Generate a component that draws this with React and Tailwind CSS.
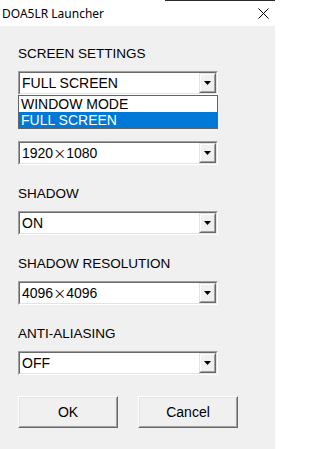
import React from "react";

const Arrow = () => (
  <svg width="7" height="4" viewBox="0 0 7 4" className="block">
    <polygon points="0,0 7,0 3.5,4" fill="#000" />
  </svg>
);

const Times = () => (
  <span className="font-['Noto_Sans_CJK_JP',sans-serif] text-[13px]">×</span>
);

const Combo = ({ children, open }) => (
  <div className="relative w-[200px]">
    <div className="border border-t-[#a0a0a0] border-l-[#a0a0a0] border-b-white border-r-white">
      <div className="flex h-[22px] border border-t-[#696969] border-l-[#696969] border-b-[#e3e3e3] border-r-[#e3e3e3] bg-white">
        <div className="flex-1 pl-[2px] leading-[20px] text-[14px] text-black whitespace-nowrap">
          {children}
        </div>
        <div className="w-[17px] border border-t-[#e3e3e3] border-l-[#e3e3e3] border-b-[#696969] border-r-[#696969]">
          <div className="flex h-full items-center justify-center border border-t-white border-l-white border-b-[#a0a0a0] border-r-[#a0a0a0] bg-[#f0f0f0]">
            <Arrow />
          </div>
        </div>
      </div>
    </div>
    {open && (
      <div className="absolute left-0 top-[24px] z-10 w-[200px] border border-[#646464] bg-white text-[14px] leading-4">
        <div className="h-4 pl-[2px] text-black">WINDOW MODE</div>
        <div className="h-4 pl-[2px] bg-[#0078d7] text-white">FULL SCREEN</div>
      </div>
    )}
  </div>
);

const Section = ({ label, children }) => (
  <div className="mb-[21px]">
    <div className="mb-[9px] h-4 leading-4 text-[13.5px] text-black">{label}</div>
    {children}
  </div>
);

const Button = ({ children }) => (
  <button className="w-[100px] h-[32px] border border-t-white border-l-white border-b-[#696969] border-r-[#696969]">
    <div className="flex h-full items-center justify-center border border-t-[#e3e3e3] border-l-[#e3e3e3] border-b-[#a0a0a0] border-r-[#a0a0a0] bg-[#f0f0f0] text-[14px] text-black">
      {children}
    </div>
  </button>
);

export default function App() {
  return (
    <div className="h-[449px] w-[275px] overflow-hidden bg-[#f0f0f0] font-['Liberation_Sans',Arial,sans-serif]">
      {/* title bar */}
      <div className="bg-white">
        <div className="flex h-px">
          <div className="w-[165px] bg-white" />
          <div className="flex-1 bg-[#2b2b2b]" />
        </div>
        <div className="flex h-[25px] items-center justify-between pl-[2px] pr-[6px]">
          <span className="font-['Noto_Sans',sans-serif] text-[12px] leading-4 text-black">
            DOA5LR Launcher
          </span>
          <svg width="11" height="11" viewBox="0 0 11 11" className="mb-[1px]">
            <path d="M0.5 0.5 L10.5 10.5 M10.5 0.5 L0.5 10.5" stroke="#000" strokeWidth="1" />
          </svg>
        </div>
      </div>

      <div className="pl-[18px] pt-[20px]">
        <Section label="SCREEN SETTINGS">
          <Combo open>FULL SCREEN</Combo>
        </Section>
        <Section label="RESOLUTION">
          <Combo>
            1920<Times />1080
          </Combo>
        </Section>
        <Section label="SHADOW">
          <Combo>ON</Combo>
        </Section>
        <Section label="SHADOW RESOLUTION">
          <Combo>
            4096<Times />4096
          </Combo>
        </Section>
        <Section label="ANTI-ALIASING">
          <Combo>OFF</Combo>
        </Section>
        <div className="mt-[5px] flex gap-[20px]">
          <Button>OK</Button>
          <Button>Cancel</Button>
        </div>
      </div>
    </div>
  );
}
